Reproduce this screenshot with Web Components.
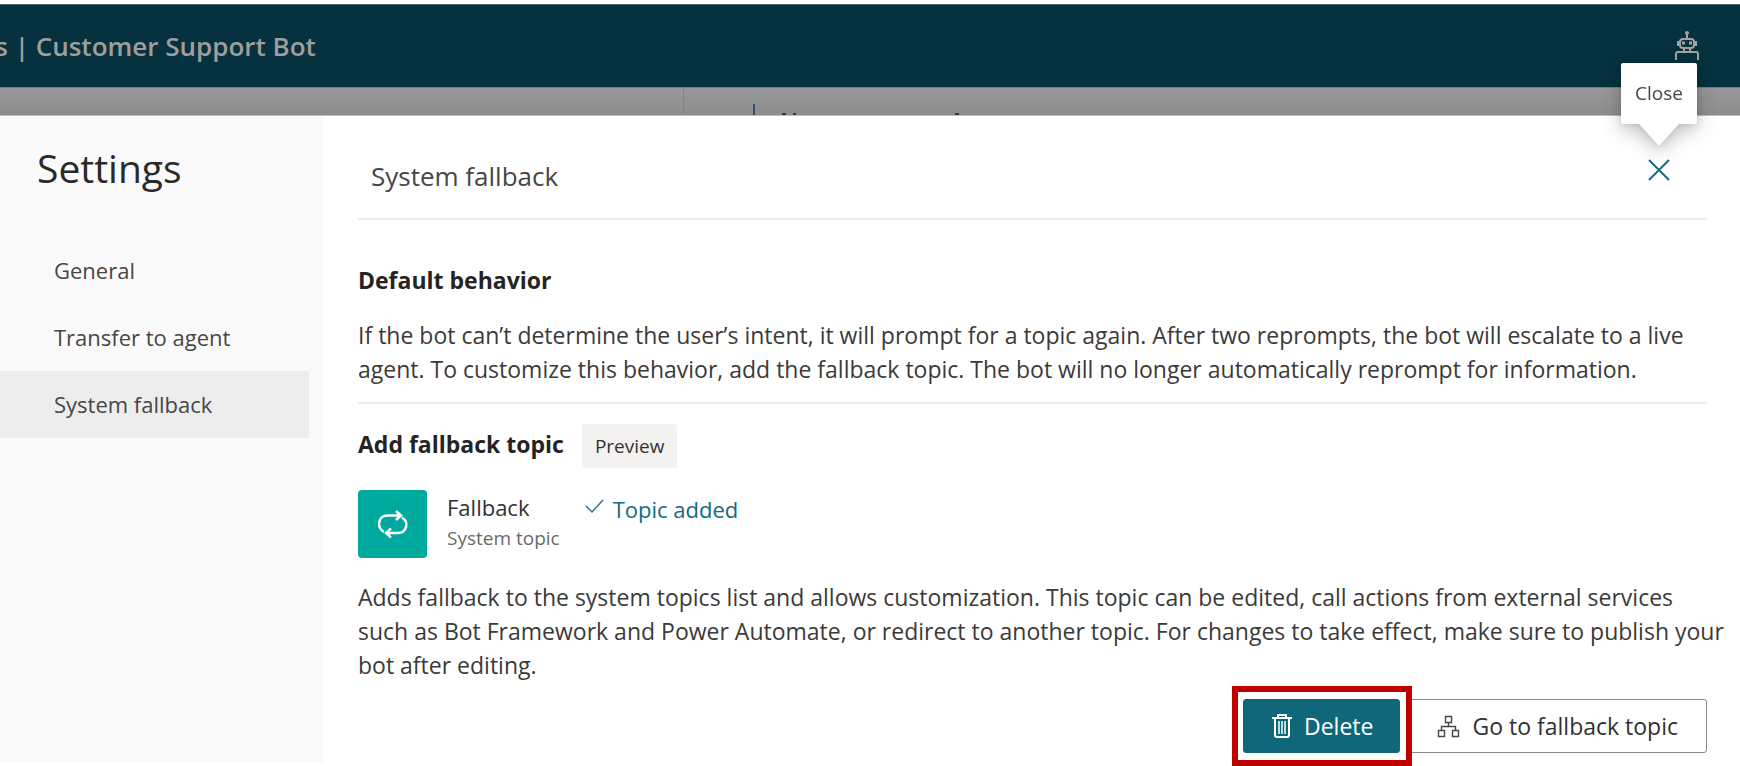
<!DOCTYPE html>
<html lang="en">
<head>
<meta charset="utf-8">
<title>Settings | Customer Support Bot</title>
<style>
  body { margin: 0; background: #fff; font-family: "Open Sans", "Segoe UI", sans-serif; color: #323130; }
</style>
</head>
<body>
<app-shell>
  <app-header slot="header">rs | Customer Support Bot</app-header>
  <page-behind slot="behind"></page-behind>
  <settings-panel slot="panel">
    <settings-nav slot="nav" heading="Settings">
      <nav-item>General</nav-item>
      <nav-item>Transfer to agent</nav-item>
      <nav-item current>System fallback</nav-item>
    </settings-nav>
    <panel-header slot="content">System fallback</panel-header>
    <info-section slot="content" heading="Default behavior">
      <span>If the bot can’t determine the user’s intent, it will prompt for a topic again. After two reprompts, the bot will escalate to a live agent. To customize this behavior, add the fallback topic. The bot will no longer automatically reprompt for information.</span>
    </info-section>
    <fallback-section slot="content"></fallback-section>
  </settings-panel>
</app-shell>

<script>
const define = (name, html, setup) => customElements.define(name, class extends HTMLElement {
  constructor() {
    super();
    this.attachShadow({ mode: 'open' }).innerHTML = html;
  }
  connectedCallback() { if (setup) setup(this, this.shadowRoot); }
});

define('app-shell', `
  <style>
    :host { display: flex; flex-direction: column; min-height: 100vh; overflow: hidden; box-sizing: border-box; padding-top: 4px; }
    ::slotted([slot="panel"]) { flex: 1; }
  </style>
  <slot name="header"></slot><slot name="behind"></slot><slot name="panel"></slot>`);

define('app-header', `
  <style>
    :host { display: block; }
    header { display: flex; align-items: center; justify-content: space-between; height: 83px; box-sizing: border-box; padding: 0 41px 0 0;
      background: #06313e; border-top: 1px solid #51646d; color: #a09e9c; }
    h1 { margin: 0 0 0 -16px; font-size: 26px; line-height: 40px; font-weight: 600; white-space: nowrap; }
    svg { display: block; }
  </style>
  <header>
    <h1><slot></slot></h1>
    <svg width="24" height="30" viewBox="0 0 24 30" fill="none" stroke="#a3a3a3" stroke-width="2" role="img" aria-label="Bot">
      <path d="M12 3v5M8 8h8a3 3 0 0 1 3 3v3a3 3 0 0 1-3 3H8a3 3 0 0 1-3-3v-3a3 3 0 0 1 3-3zM9 17v3M15 17v3M1 29v-6a2 2 0 0 1 2-2h18a2 2 0 0 1 2 2v6"/>
      <path d="M3 10v5M21 10v5" stroke-width="2"/>
      <path d="M7 12h3M14 12h3" stroke-width="3"/>
      <circle cx="12" cy="2" r="2" fill="#a3a3a3" stroke="none"/>
    </svg>
  </header>`);

define('page-behind', `
  <style>
    :host { display: flex; height: 29px; box-sizing: border-box; background: linear-gradient(#989898, #8d8d8d); border-top: 1px solid #727f84; border-bottom: 1px solid #bdbdbd; }
    .side { width: 683px; border-right: 1px solid #848484; }
    svg { display: block; }
  </style>
  <div class="side"></div>
  <svg width="300" height="27" viewBox="0 0 300 27" aria-hidden="true">
    <path d="M70 16v11" stroke="#34506c" stroke-width="2"/>
    <path d="M98 26h4M109 26h3M271 26h4" stroke="#3a3a3a" stroke-width="2"/>
  </svg>`);

define('settings-panel', `
  <style>
    :host { display: grid; grid-template-columns: 323px minmax(0, 1fr); background: #fff; }
    aside { background: #fafafa; margin-bottom: 3px; }
    main { padding: 0 33px 0 35px; }
  </style>
  <aside><slot name="nav"></slot></aside>
  <main><slot name="content"></slot></main>`);

define('settings-nav', `
  <style>
    :host { display: block; padding-top: 26px; }
    h2 { margin: 0 0 43px 37px; font-size: 39px; line-height: 52px; font-weight: 400; color: #2b2a29; }
    nav { display: flex; flex-direction: column; margin-right: 14px; }
  </style>
  <h2></h2><nav><slot></slot></nav>`,
  (host, root) => { root.querySelector('h2').textContent = host.getAttribute('heading'); });

define('nav-item', `
  <style>
    :host { display: block; }
    a { display: block; padding-left: 54px; font-size: 22px; line-height: 67px; color: #484644; text-decoration: none; }
    :host([current]) a { background: #ededed; }
  </style>
  <a href="#"><slot></slot></a>`,
  (host, root) => { if (host.hasAttribute('current')) root.querySelector('a').setAttribute('aria-current', 'page'); });

define('panel-header', `
  <style>
    :host { display: flex; justify-content: space-between; align-items: flex-start; padding: 40px 36px 22px 13px; border-bottom: 2px solid #ebebeb; }
    h2 { margin: 0; font-size: 26px; line-height: 40px; font-weight: 400; color: #484644; }
  </style>
  <h2><slot></slot></h2>
  <close-button></close-button>`);

define('close-button', `
  <style>
    :host { display: block; position: relative; }
    button { display: block; padding: 0; border: 0; background: none; }
    svg { display: block; }
    .tip { position: absolute; left: 50%; bottom: 60px; transform: translateX(-50%); width: 76px; box-sizing: border-box; border-radius: 2px;
      background: #fff; text-align: center; font-size: 19px; line-height: 61px; color: #484644; filter: drop-shadow(0 6px 10px rgba(0,0,0,.22)) drop-shadow(0 1px 3px rgba(0,0,0,.12)); }
    .tip::after { content: ""; position: absolute; left: 18px; top: 100%; border: solid transparent; border-width: 22px 20px 0; border-top-color: #fff; }
  </style>
  <button type="button" aria-label="Close panel" aria-describedby="tip">
    <svg width="24" height="28" viewBox="0 0 24 28" fill="none" stroke="#1a6a8a" stroke-width="2"><path d="M2 4l20 20M22 4L2 24"/></svg>
  </button>
  <div class="tip" id="tip" role="tooltip">Close</div>`);

define('info-section', `
  <style>
    :host { display: block; padding: 43px 0 16px; border-bottom: 2px solid #ebebeb; }
    h3 { margin: 0 0 21px; font-size: 23px; line-height: 34px; font-weight: 700; color: #252423; }
    p { margin: 0 -20px 0 0; font-size: 23px; line-height: 34px; color: #3b3a39; }
  </style>
  <h3></h3><p><slot></slot></p>`,
  (host, root) => { root.querySelector('h3').textContent = host.getAttribute('heading'); });

define('fallback-section', `
  <style>
    :host { display: block; padding-top: 20px; }
    .title { display: flex; align-items: baseline; gap: 18px; }
    h3 { margin: 0; font-size: 23px; line-height: 34px; font-weight: 700; color: #252423; }
    .badge { padding: 0 13px; border-radius: 3px; background: #f3f2f1; font-size: 19px; line-height: 44px; }
    .topic { display: flex; margin: 22px 0; }
    .tile { display: grid; place-items: center; width: 69px; height: 68px; border-radius: 4px; background: #00a99d; }
    .names { margin: 2px 25px 0 20px; }
    .name { font-size: 22px; line-height: 30px; }
    .kind { font-size: 19px; line-height: 32px; color: #6b6968; }
    .added { display: flex; gap: 9px; align-items: flex-start; margin-top: 2px; font-size: 22px; line-height: 34px; color: #0f6c84; }
    .added svg { margin-top: 6px; }
    p { margin: 0 -20px 0 0; font-size: 23px; line-height: 34px; color: #3b3a39; }
    .actions { display: flex; justify-content: flex-end; align-items: center; margin-top: 4px; }
    .marked { position: relative; border: 6px solid #c00000; padding: 7px 6px 7px 9px; background: #fff; z-index: 1; }
    .actions action-button:last-child { margin-left: -4px; }
    svg { display: block; }
  </style>
  <div class="title"><h3>Add fallback topic</h3><span class="badge">Preview</span></div>
  <div class="topic">
    <div class="tile">
      <svg width="34" height="30" viewBox="0 0 34 30" fill="none" stroke="#fff" stroke-width="2.400" aria-hidden="true">
        <path d="M8 23C0 18 2 6.500 12 6.500h13M20 2l5 4.500-5 4.500"/>
        <path d="M26 8.500c8 5 4 15.500-4 15.500H10M15 19.500l-5 4.500 5 4.500"/>
      </svg>
    </div>
    <div class="names"><div class="name">Fallback</div><div class="kind">System topic</div></div>
    <div class="added">
      <svg width="19" height="18" viewBox="0 0 19 18" fill="none" stroke="#35738a" stroke-width="1.500" aria-hidden="true"><path d="M1 8l6 6L18 2"/></svg>
      <span>Topic added</span>
    </div>
  </div>
  <p>Adds fallback to the system topics list and allows customization. This topic can be edited, call actions from external services such as Bot Framework and Power Automate, or redirect to another topic. For changes to take effect, make sure to publish your bot after editing.</p>
  <div class="actions">
    <div class="marked">
      <action-button primary>
        <svg slot="icon" width="20" height="24" viewBox="0 0 20 24" fill="none" stroke="#fff" stroke-width="2" aria-hidden="true"><path d="M0 4h20M6 4V1h8v3M3 4v17a2 2 0 0 0 2 2h10a2 2 0 0 0 2-2V4"/><path d="M7 7v13M10 7v13M13 7v13" stroke-width="1.500"/></svg>
        Delete
      </action-button>
    </div>
    <action-button>
      <svg slot="icon" width="23" height="23" viewBox="0 0 23 23" fill="none" stroke="#484644" stroke-width="1.400" aria-hidden="true"><path d="M8.500 1.500h6v6h-6zM1.500 15.500h6v6h-6zM15.500 15.500h6v6h-6zM11.500 7.500v4M4.500 15.500v-4h14v4"/></svg>
      Go to fallback topic
    </action-button>
  </div>`);

define('action-button', `
  <style>
    :host { display: block; }
    button { display: flex; align-items: center; gap: 12px; height: 54px; box-sizing: border-box; margin: 0; padding: 0 28px;
      border: 1px solid #8a8886; border-radius: 3px; background: #fff; font: 23px/34px "Open Sans", "Segoe UI", sans-serif; color: #323130; white-space: nowrap; }
    :host([primary]) button { background: #10677a; border-color: #10677a; color: #fff; padding: 0 26px 0 28px; }
    ::slotted(svg) { display: block; }
  </style>
  <button type="button"><slot name="icon"></slot><span><slot></slot></span></button>`);
</script>
</body>
</html>
